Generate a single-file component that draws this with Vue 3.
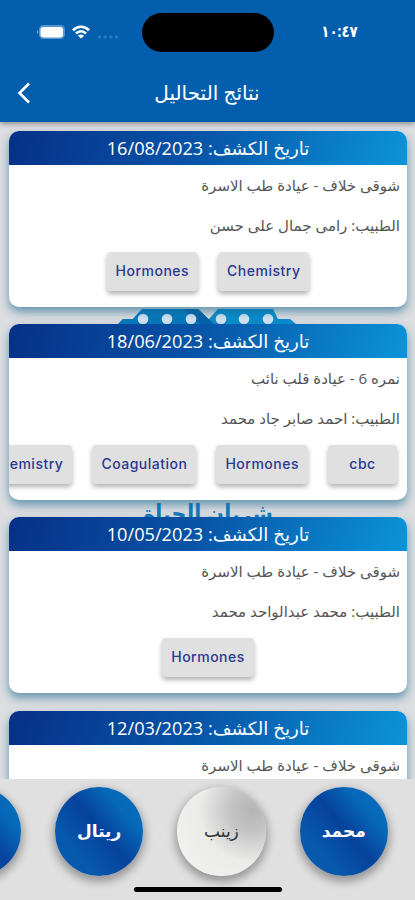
<script setup>
import { ref } from "vue";

const visits = ref([
  {
    date: "16/08/2023",
    clinic: "شوقى خلاف - عيادة طب الاسرة",
    doctor: "رامى جمال على حسن",
    tests: ["Chemistry", "Hormones"],
  },
  {
    date: "18/06/2023",
    clinic: "نمره 6 - عيادة قلب نائب",
    doctor: "احمد صابر جاد محمد",
    tests: ["cbc", "Hormones", "Coagulation", "Chemistry"],
  },
  {
    date: "10/05/2023",
    clinic: "شوقى خلاف - عيادة طب الاسرة",
    doctor: "محمد عبدالواحد محمد",
    tests: ["Hormones"],
  },
  {
    date: "12/03/2023",
    clinic: "شوقى خلاف - عيادة طب الاسرة",
    doctor: "",
    tests: [],
  },
]);

const members = ref(["محمد", "زينب", "ريتال", ""]);
const selected = ref(1);
</script>

<template>
  <div class="screen" dir="rtl">
    <!-- HEADER -->
    <header class="header">
      <div class="status">
        <span class="clock">١٠:٤٧</span>
        <div class="island"></div>
        <div class="status-icons">
          <svg class="dots" viewBox="0 0 22 4">
            <circle v-for="n in 4" :key="n" :cx="n * 5.6 - 3" cy="2" r="1.600" />
          </svg>
          <svg class="wifi" viewBox="0 0 18 14" fill="none">
            <path d="M1 5.2C5.5 .6 12.5 .6 17 5.2" stroke-width="2.700" />
            <path d="M4 8.5c3-2.900 7-2.900 10 0" stroke-width="2.500" />
            <path d="M9 13.6 5.900 10.800c1.800-1.600 4.400-1.600 6.200 0z" fill="#fff" stroke="none" />
          </svg>
          <svg class="battery" viewBox="0 0 28 14">
            <rect x="2" y="0" width="26" height="14" rx="4.5" fill="#5595cd" />
            <path d="M1.2 4.8C-.2 5.5-.2 8.5 1.2 9.2z" fill="#8db9df" />
            <rect x="3.500" y="2" width="22.500" height="10.500" rx="3" fill="#fff" />
          </svg>
        </div>
      </div>
      <div class="title-row">
        <h1>نتائج التحاليل</h1>
        <svg class="back" viewBox="0 0 14 22" fill="none">
          <path d="M12 1.5 2.5 11l9.500 9.500" stroke="#fff" stroke-width="2.6" />
        </svg>
      </div>
    </header>

    <!-- RESULTS -->
    <main class="results">
      <!-- hospital logo behind the cards -->
      <div class="watermark">
        <svg viewBox="0 0 180 40">
          <path d="M0 16 5 11H15L24 1H80L90 12 100 1H155L160 11H172L178 16V40H0z" fill="#0a8dcc" />
          <path d="M15 11 24 1H80L98 18V40H0V16L5 11z" fill="#0878ba" />
          <path d="M66 1H80L98 18H84z" fill="#0662a8" />
          <circle
            v-for="x in [25, 49, 73, 103, 126, 150]"
            :key="x"
            :cx="x"
            cy="11"
            r="5.300"
            fill="#d3e5f2"
          />
        </svg>
        <p>شريان الحياة</p>
      </div>

      <section v-for="visit in visits" :key="visit.date" class="card">
        <h2>تاريخ الكشف: <bdi>{{ visit.date }}</bdi></h2>
        <div class="body">
          <p>{{ visit.clinic }}</p>
          <p v-if="visit.doctor">الطبيب: {{ visit.doctor }}</p>
          <div class="tests" :class="{ scroll: visit.tests.length > 3 }">
            <button v-for="test in visit.tests" :key="test">{{ test }}</button>
          </div>
        </div>
      </section>
    </main>

    <!-- FAMILY MEMBERS -->
    <footer class="members">
      <div class="circles">
        <button
          v-for="(name, i) in members"
          :key="i"
          :class="{ active: i === selected }"
          @click="selected = i"
        >
          {{ name }}
        </button>
      </div>
      <div class="home-bar"></div>
    </footer>
  </div>
</template>

<style>
body {
  margin: 0;
  overflow: hidden;
}
</style>

<style scoped>
.screen {
  width: 415px;
  height: 900px;
  overflow: hidden;
  display: flex;
  flex-direction: column;
  background: #dcdee0;
  font-family: "Open Sans", "DejaVu Sans", sans-serif;
}

h1,
h2,
p {
  margin: 0;
  font-weight: 400;
  white-space: nowrap;
}

button {
  border: none;
  padding: 0;
  flex: none;
}

.header {
  height: 122px;
  flex: none;
  background: #035fae;
  color: #fff;
  box-shadow: 0 2px 5px rgba(0, 0, 0, 0.35);
  position: relative;
  z-index: 1;
}

.status {
  display: grid;
  grid-template-columns: 141px 132px 142px;
  align-items: center;
  padding-top: 12px;
  height: 40px;
}

.clock {
  text-align: center;
  font-size: 16px;
  font-weight: 700;
  transform: translate(-5px, -1px) scaleX(0.84);
}

.island {
  height: 39px;
  border-radius: 20px;
  background: #000;
}

.status-icons {
  display: flex;
  align-items: center;
  gap: 7px;
  padding-right: 23px;
}

.dots {
  width: 22px;
  height: 4px;
  margin-top: 9px;
  fill: #2f7cc0;
}

.wifi {
  width: 18px;
  height: 14px;
  stroke: #fff;
}

.battery {
  width: 28px;
  height: 14px;
}

.title-row {
  display: flex;
  align-items: center;
  height: 80px;
  box-sizing: border-box;
  padding: 1px 32px 0 17px;
}

.title-row h1 {
  flex: 1;
  text-align: center;
  font-size: 20px;
}

.back {
  width: 14px;
  height: 22px;
}

.results {
  height: 657px;
  flex: none;
  box-sizing: border-box;
  overflow: hidden;
  position: relative;
  padding: 9px 8px 0 9px;
  display: flex;
  flex-direction: column;
  gap: 17.200px;
}

.watermark {
  position: absolute;
  left: 118px;
  top: 186px;
  width: 180px;
}

.watermark svg {
  display: block;
  width: 180px;
  height: 40px;
}

.watermark p {
  margin-top: 145px;
  text-align: center;
  font-size: 24px;
  font-weight: 700;
  line-height: 40px;
  color: #157ab9;
  transform: scale(0.86, 1.1);
}

.card {
  position: relative;
  height: 176px;
  flex: none;
  border-radius: 10px;
  background: #fff;
  box-shadow: 0 5px 10px rgba(20, 100, 145, 0.6);
}

.card h2 {
  height: 34px;
  border-radius: 10px 10px 0 0;
  background: linear-gradient(110deg, #073087 0%, #0755a8 48%, #0b94d9 100%);
  color: #fff;
  font-size: 18.200px;
  line-height: 35px;
  text-align: center;
}

.body {
  height: 142px;
  overflow: hidden;
  border-radius: 0 0 10px 10px;
}

.body p {
  padding-right: 7px;
  height: 40px;
  line-height: 40px;
  font-size: 15px;
  color: #555;
}

.tests {
  display: flex;
  justify-content: center;
  gap: 20px;
  padding: 7px 10px;
}

.tests.scroll {
  justify-content: flex-start;
}

.tests button {
  height: 39px;
  min-width: 69px;
  padding: 0 9px 2px;
  border-radius: 4px;
  background: #e0e0e0;
  box-shadow: 0 3px 5px rgba(0, 0, 0, 0.3);
  color: #2b3990;
  font: 450 14px "Inter", sans-serif;
  letter-spacing: 0.5px;
}

.members {
  flex: 1;
  background: #e0e0e0;
  position: relative;
  z-index: 1;
}

.circles {
  display: flex;
  gap: 33.800px;
  padding: 8px 27px 0;
}

.circles button {
  width: 88.500px;
  height: 88.500px;
  border-radius: 50%;
  background: linear-gradient(50deg, #0658ad 5%, #0759ae 25%, #06429c 52%, #0668b8 75%, #0870bd 100%);
  box-shadow: 0 4px 9px 2px rgba(0, 0, 0, 0.32);
  color: #fff;
  font: 600 17px "DejaVu Sans", sans-serif;
}

.circles .active {
  background: radial-gradient(circle at 84% 26%, #b5b5b5 0%, #c4c4c4 22%, #ebebea 52%, #f4f4f2 100%);
  color: #333;
  font-weight: 400;
}

.home-bar {
  width: 148px;
  height: 5px;
  margin: 11px auto 0;
  border-radius: 3px;
  background: #000;
}
</style>
